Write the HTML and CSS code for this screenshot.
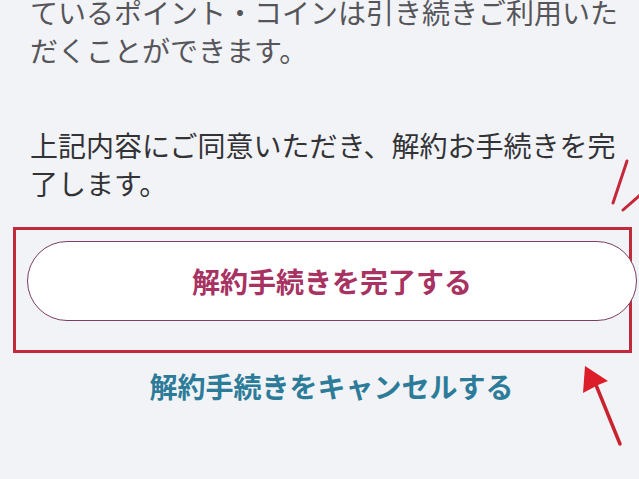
FILE: index.html
```html
<!DOCTYPE html>
<html lang="ja">
<head>
<meta charset="utf-8">
<title>解約手続き</title>
<link rel="stylesheet" href="styles.css">
</head>
<body>
<main class="page">
  <p class="note note-muted">ているポイント・コインは引き続きご利用いただくことができます。</p>
  <p class="note note-agree">上記内容にご同意いただき、解約お手続きを完了します。</p>
  <div class="highlight">
    <button class="btn-complete" type="button">解約手続きを完了する</button>
  </div>
  <a class="cancel-link" href="#">解約手続きをキャンセルする</a>
</main>
<svg class="marks" viewBox="0 0 639 479" width="639" height="479" aria-hidden="true">
  <line x1="627" y1="161" x2="613" y2="203" class="mark-line"/>
  <line x1="640" y1="195" x2="623" y2="210" class="mark-line"/>
  <line x1="596" y1="385" x2="620" y2="444" class="mark-line arrow-shaft"/>
  <polygon points="585,366 608,381 598,385 583,393" class="arrow-head"/>
</svg>
</body>
</html>
```
FILE: styles.css
```css
html, body {
  margin: 0;
  padding: 0;
}
body {
  width: 639px;
  height: 479px;
  overflow: hidden;
  background: #f2f3f7;
  font-family: "Noto Sans CJK JP", "Noto Sans", sans-serif;
  position: relative;
}
.page {
  padding: 0 9px 0 30px;
  margin-top: -7px;
}
.note {
  margin: 0;
  font-size: 28px;
  line-height: 38px;
  color: #333336;
}
.note-muted {
  color: #56565a;
}
.note-agree {
  margin-top: 57px;
}
.highlight {
  margin: 25px -2px 0 -17px;
  border: 3px solid #c02a3b;
  padding: 11px 0 29px 11px;
}
.btn-complete {
  display: flex;
  align-items: center;
  justify-content: center;
  width: calc(100% + 8px);
  height: 80px;
  margin: 0;
  padding: 0;
  background: #ffffff;
  border: 1.5px solid #7c3e63;
  border-radius: 40px;
  font-family: inherit;
  font-size: 28px;
  font-weight: 700;
  color: #a83261;
  cursor: pointer;
}
.cancel-link {
  display: block;
  margin-top: 14px;
  text-align: center;
  font-size: 28px;
  line-height: 38px;
  font-weight: 700;
  color: #2c7c99;
  text-decoration: none;
  padding-left: 3px;
}
.marks {
  position: absolute;
  left: 0;
  top: 0;
  pointer-events: none;
}
.mark-line {
  stroke: #c4283a;
  stroke-width: 3;
  stroke-linecap: round;
}
.arrow-shaft {
  stroke: #c9232f;
  stroke-width: 3.5;
}
.arrow-head {
  fill: #dc1e2b;
}
```
